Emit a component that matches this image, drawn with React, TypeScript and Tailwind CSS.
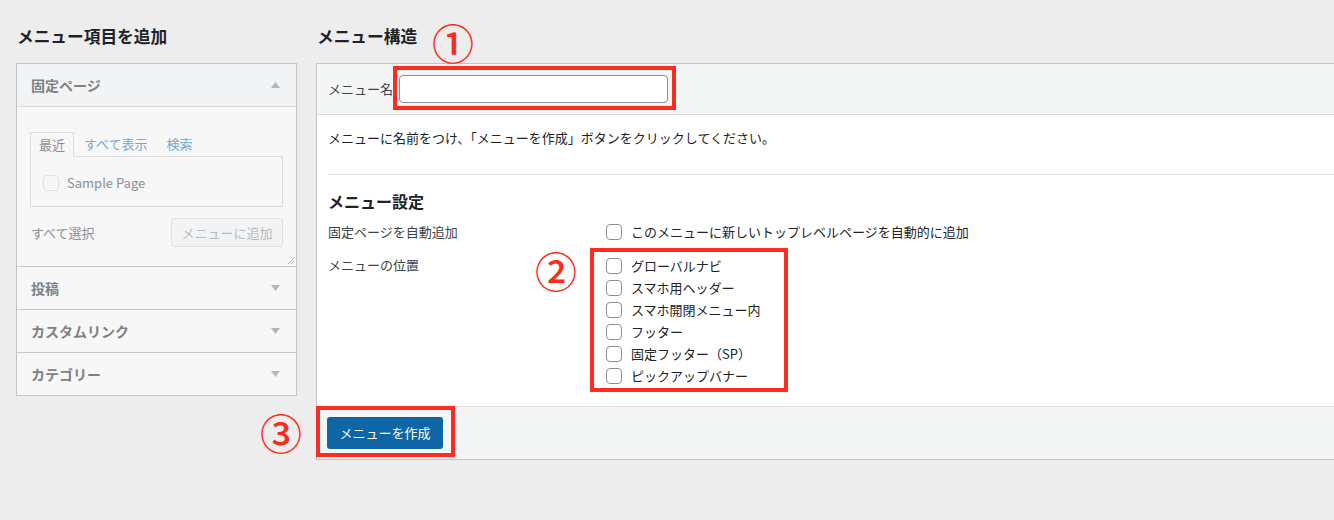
import React from 'react';

const font = { fontFamily: '"Noto Sans CJK JP", "Noto Sans", sans-serif' };

function Circled({ char, className }: { char: string; className: string }) {
  return (
    <div
      className={`absolute flex h-[38px] w-[38px] items-center justify-center text-[42px] leading-none font-medium text-[#ff2a1a] ${className}`}
    >
      {char}
    </div>
  );
}

function Triangle({ up }: { up?: boolean }) {
  return (
    <svg width="9" height="6" viewBox="0 0 9 6" className="shrink-0">
      {up ? <path d="M4.5 0 L9 6 L0 6 Z" fill="#b4b6b9" /> : <path d="M0 0 L9 0 L4.5 6 Z" fill="#b4b6b9" />}
    </svg>
  );
}

function Box() {
  return <span className="h-4 w-4 shrink-0 rounded-[4px] border border-[#8c8f94] bg-white" />;
}

function AccordionRow({ label }: { label: string }) {
  return (
    <div className="flex h-[43px] items-center justify-between border-b border-[#c9cacc] pr-[16px] pl-[14px]">
      <span className="text-[14px] font-bold text-[#7d8085]">{label}</span>
      <Triangle />
    </div>
  );
}

const locations = ['グローバルナビ', 'スマホ用ヘッダー', 'スマホ開閉メニュー内', 'フッター', '固定フッター（SP）', 'ピックアップバナー'];

export default function App() {
  return (
    <div className="flex h-[520px] w-[1334px] overflow-hidden bg-[#ededed] pt-[24px] pl-[16px]" style={font}>
      {/* left column */}
      <div className="w-[281px] shrink-0">
        <h2 className="h-[24px] pl-[1px] text-[16.7px] leading-[24px] font-bold text-[#1d2327]">メニュー項目を追加</h2>
        <div className="mt-[15px] border border-[#c3c4c7] bg-[#f7f7f7]">
          <div className="flex h-[43px] items-center justify-between border-b border-[#dcdcde] bg-[#f2f3f4] pr-[16px] pl-[14px]">
            <span className="text-[14px] font-bold text-[#7d8085]">固定ページ</span>
            <Triangle up />
          </div>
          <div className="relative h-[160px] border-b border-[#c9cacc] pt-[25px] pr-[13px] pl-[13px]">
            <div className="flex h-[24px] items-end text-[13px]">
              <div className="relative z-10 -mb-px flex h-[25px] items-center border border-b-0 border-[#dcdcde] bg-[#f7f7f7] px-[8px] text-[#8c8f94]">
                最近
              </div>
              <span className="ml-[10px] self-center text-[#74a9d6]">すべて表示</span>
              <span className="ml-[19px] self-center text-[#74a9d6]">検索</span>
            </div>
            <div className="flex h-[51px] items-center gap-[8px] border border-[#dcdcde] pt-[2px] pl-[12px]">
              <span className="h-[16px] w-[16px] rounded-[4px] border border-[#e2e3e4] bg-[#f7f7f7]" />
              <span className="text-[13px] text-[#8c8f94]">Sample Page</span>
            </div>
            <div className="mt-[11px] flex items-center justify-between">
              <span className="pl-[1px] text-[13px] text-[#8c8f94]">すべて選択</span>
              <div className="flex h-[29px] w-[112px] items-center justify-center rounded-[3px] border border-[#e0e1e2] bg-[#f2f3f4] text-[13px] text-[#b8babd]">
                メニューに追加
              </div>
            </div>
            <svg width="8" height="8" viewBox="0 0 8 8" className="absolute right-[1px] bottom-[1px]">
              <path d="M7 1 L1 7 M7 4 L4 7" stroke="#a7aaad" strokeWidth="1" />
            </svg>
          </div>
          <AccordionRow label="投稿" />
          <AccordionRow label="カスタムリンク" />
          <div className="flex h-[42px] items-center justify-between pr-[16px] pl-[14px]">
            <span className="text-[14px] font-bold text-[#7d8085]">カテゴリー</span>
            <Triangle />
          </div>
        </div>
      </div>

      {/* right column */}
      <div className="ml-[19px] w-[1040px] shrink-0">
        <div className="relative h-[24px]">
          <h2 className="pl-[1px] text-[16.7px] leading-[24px] font-bold text-[#1d2327]">メニュー構造</h2>
          <Circled char="①" className="top-[-1px] left-[118px]" />
        </div>
        <div className="mt-[15px] border border-[#c3c4c7] bg-white">
          <div className="flex h-[51px] items-center border-b border-[#dcdcde] bg-[#f4f5f5] pl-[11px]">
            <span className="text-[13px] text-[#3c434a]">メニュー名</span>
            <div className="relative ml-[6px]">
              <div className="h-[28px] w-[269px] rounded-[4px] border border-[#8c8f94] bg-white" />
              <div className="absolute top-[-9px] right-[-8px] bottom-[-7px] left-[-6px] border-[4px] border-[#ff2a22]" />
            </div>
          </div>

          <div className="px-[11px] pt-[13px] pb-[19px]">
            <p className="text-[13px] leading-[20px] text-[#1d2327]">
              メニューに名前をつけ、「メニューを作成」ボタンをクリックしてください。
            </p>
            <div className="mt-[26px] border-t border-[#e2e3e4] pt-[14px]">
              <h3 className="text-[16px] leading-[24px] font-bold text-[#1d2327]">メニュー設定</h3>
              <div className="mt-[8px] flex h-[22px] items-center">
                <span className="w-[278px] text-[13px] text-[#3c434a]">固定ページを自動追加</span>
                <div className="flex items-center gap-[9px]">
                  <Box />
                  <span className="text-[13px] text-[#1d2327]">このメニューに新しいトップレベルページを自動的に追加</span>
                </div>
              </div>
              <div className="mt-[12px] flex">
                <span className="w-[278px] text-[13px] leading-[20px] text-[#3c434a]">メニューの位置</span>
                <div className="relative">
                  {locations.map((loc) => (
                    <div key={loc} className="flex h-[22px] items-center gap-[9px]">
                      <Box />
                      <span className="text-[13px] text-[#1d2327]">{loc}</span>
                    </div>
                  ))}
                  <div className="absolute top-[-7px] bottom-[-5px] left-[-16px] w-[198px] border-[4px] border-[#ff2a22]" />
                  <Circled char="②" className="top-[-4px] left-[-69px]" />
                </div>
              </div>
            </div>
          </div>

          <div className="relative flex h-[53px] items-center border-t border-[#dcdcde] bg-[#f4f5f5] pl-[10px]">
            <div className="flex h-[32px] w-[116px] items-center justify-center rounded-[3px] bg-[#0e66a6] text-[13px] text-white">
              メニューを作成
            </div>
            <div className="absolute top-[-1px] left-[-1px] h-[51px] w-[139px] border-[4px] border-[#ff2a22]" />
            <Circled char="③" className="top-[6px] left-[-55px]" />
          </div>
        </div>
      </div>
    </div>
  );
}
